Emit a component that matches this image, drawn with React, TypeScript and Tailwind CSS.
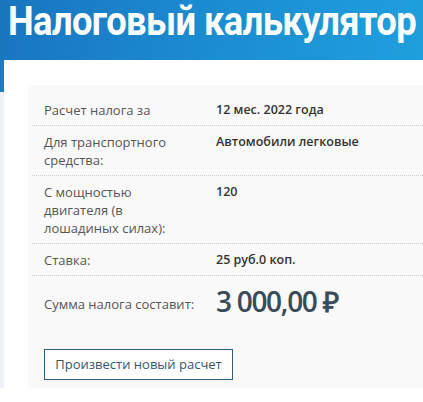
import React from "react";

const rows: { label: string[]; value: string }[] = [
  { label: ["Расчет налога за"], value: "12 мес. 2022 года" },
  { label: ["Для транспортного", "средства:"], value: "Автомобили легковые" },
  { label: ["С мощностью", "двигателя (в", "лошадиных силах):"], value: "120" },
  { label: ["Ставка:"], value: "25 руб.0 коп." },
];

export default function App() {
  return (
    <div className="w-[423px] h-[402px] bg-white overflow-hidden font-['Open_Sans',sans-serif]">
      {/* header band */}
      <div className="h-[60px] pl-[8px] pt-[1px] bg-[linear-gradient(100deg,#1a74bf_0%,#1b8ad0_45%,#1f9fdd_100%)]">
        <h1 className="w-max -mt-[5px] text-white font-['Roboto',sans-serif] font-bold text-[36px] leading-[44px] whitespace-nowrap tracking-[-0.6px] origin-top-left scale-x-[1.01] scale-y-[1.139]">
          Налоговый калькулятор
        </h1>
      </div>

      <div className="flex">
        {/* left edge strip */}
        <div className="w-[4px] flex flex-col">
          <div className="h-[32px] bg-[#1b7cc5]" />
          <div className="h-[296px] bg-[#eef1f7]" />
        </div>

        <div className="flex-1 pl-[24px] pt-[25px]">
          <div className="bg-[#f9f9f9] h-[303px] pl-[4px] pt-[9px]">
            {rows.map((r, i) => (
              <div
                key={i}
                className="flex border-b border-dotted border-[#cfcfcf] pl-[12px] pt-[7px] pb-[6px] text-[13px] leading-[18px]"
              >
                <div className="w-[172px] shrink-0 text-[#555]">
                  {r.label.map((l, j) => (
                    <div key={j}>{l}</div>
                  ))}
                </div>
                <div className="font-semibold text-[#333] text-[12.5px]">{r.value}</div>
              </div>
            ))}

            <div className="flex items-center pl-[12px] h-[57px]">
              <div className="w-[172px] shrink-0 text-[13px] text-[#555]">Сумма налога составит:</div>
              <div className="font-semibold text-[28px] leading-[34px] tracking-[-1.3px] text-[#3a4b58] -mt-[7px]">
                3 000,00 ₽
              </div>
            </div>

            <div className="pl-[12px] pt-[16px]">
              <button
                type="button"
                className="h-[31px] w-[189px] border border-[#2d5f7c] bg-white text-[13px] text-[#2f5876]"
              >
                Произвести новый расчет
              </button>
            </div>
          </div>
        </div>
      </div>
    </div>
  );
}
